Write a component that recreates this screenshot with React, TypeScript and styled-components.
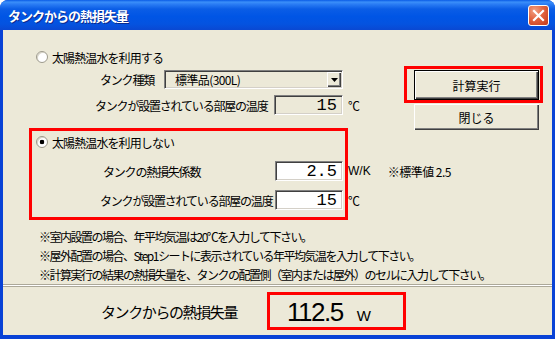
import React from 'react'
import styled, { createGlobalStyle } from 'styled-components'

const UI_FONT = `"Noto Sans CJK JP", "Noto Sans CJK SC", "Noto Sans", sans-serif`

const GlobalStyle = createGlobalStyle`
  html, body {
    margin: 0;
    padding: 0;
    background: #ffffff;
  }
  body {
    font-family: ${UI_FONT};
    font-size: 12px;
    color: #000;
  }
  #root {
    width: 555px;
    height: 339px;
  }
`

const Window = styled.div`
  width: 555px;
  height: 339px;
  display: flex;
  flex-direction: column;
  border-radius: 8px 8px 0 0;
  overflow: hidden;
  background: #0a46d8;
`

const TitleBar = styled.div`
  flex: none;
  height: 30px;
  display: flex;
  align-items: center;
  justify-content: space-between;
  padding: 0 6px 0 8px;
  background: linear-gradient(
    180deg,
    #0a5be6 0%,
    #3b8ff9 7%,
    #2a7cf4 14%,
    #0b5de6 30%,
    #0055e5 55%,
    #0453e0 80%,
    #0a48d2 100%
  );
`

const Title = styled.span`
  font-family: ${UI_FONT};
  font-size: 13px;
  font-weight: bold;
  letter-spacing: -1px;
  color: #ffffff;
  text-shadow: 1px 1px 0 #0a2a8e;
`

const CloseButton = styled.div`
  width: 21px;
  height: 21px;
  box-sizing: border-box;
  border: 1px solid #ffffff;
  border-radius: 3px;
  display: flex;
  align-items: center;
  justify-content: center;
  background: radial-gradient(circle at 30% 25%, #f2a083 0%, #e2643f 45%, #c2391a 100%);
`

const Frame = styled.div`
  flex: 1;
  display: flex;
  flex-direction: column;
  border-style: solid;
  border-color: #0842d6;
  border-width: 0 3px 4px 3px;
  background: #ece9d8;
`

const TopSection = styled.div`
  display: flex;
  align-items: flex-start;
  gap: 56px;
  padding: 13px 0 0 26px;
`

const Options = styled.div`
  width: 319px;
  display: flex;
  flex-direction: column;
  gap: 6px;
`

const Group = styled.div<{ $highlight?: boolean }>`
  display: flex;
  flex-direction: column;
  border: 3px solid ${({ $highlight }) => ($highlight ? '#ff0000' : 'transparent')};
  padding: 2px 4px ${({ $highlight }) => ($highlight ? 7 : 4)}px 4px;
`

const RadioRow = styled.label`
  height: 18px;
  display: flex;
  align-items: center;
  gap: 4px;
  white-space: nowrap;
  letter-spacing: -0.9px;
`

const RadioMark = styled.span<{ $checked?: boolean }>`
  flex: none;
  width: 12px;
  height: 12px;
  box-sizing: border-box;
  border-radius: 50%;
  border: 1px solid #9d9a8c;
  box-shadow: inset 1px 1px 0 #d9d6ca;
  background: ${({ $checked }) =>
    $checked ? 'radial-gradient(circle, #000 0 2px, #ffffff 2.6px)' : '#ffffff'};
`

const Field = styled.div<{ $top: number; $indent: number }>`
  display: flex;
  align-items: center;
  margin-top: ${({ $top }) => $top}px;
  padding-left: ${({ $indent }) => $indent}px;
  white-space: nowrap;
`

const Label = styled.span<{ $width: number }>`
  flex: none;
  width: ${({ $width }) => $width}px;
  letter-spacing: -1.2px;
`

const sunken = `
  box-sizing: border-box;
  border: 1px solid;
  border-color: #808080 #ffffff #ffffff #808080;
  box-shadow: inset 1px 1px 0 #404040, inset -1px -1px 0 #d4d0c8;
`

const Select = styled.div`
  ${sunken}
  flex: none;
  width: 179px;
  height: 19px;
  display: flex;
  align-items: center;
  justify-content: space-between;
  padding: 0 1px 0 10px;
  background: #ece9d8;
  letter-spacing: -0.6px;
`

const DropButton = styled.span`
  width: 14px;
  height: 15px;
  display: flex;
  align-items: center;
  justify-content: center;
  background: #ece9d8;
  box-shadow: inset 1px 1px 0 #ffffff, inset -1px -1px 0 #404040, inset -2px -2px 0 #808080;
`

const NumberBox = styled.input<{ $width: number }>`
  ${sunken}
  flex: none;
  width: ${({ $width }) => $width}px;
  height: 20px;
  margin: 0;
  padding: 0 5px 0 0;
  text-align: right;
  font-family: "Liberation Mono", "DejaVu Sans Mono", monospace;
  font-size: 17px;
  color: #000;
  background: ${({ disabled }) => (disabled ? '#ece9d8' : '#ffffff')};
  outline: none;
  &:disabled {
    color: #000;
  }
`

const Unit = styled.span<{ $gap?: number; $latin?: boolean }>`
  margin-left: ${({ $gap }) => $gap ?? 5}px;
  font-family: ${({ $latin }) => ($latin ? `"Liberation Sans", ${UI_FONT}` : UI_FONT)};
  font-size: 12px;
  letter-spacing: ${({ $latin }) => ($latin ? 0 : -0.5)}px;
`

const Actions = styled.div`
  display: flex;
  flex-direction: column;
  align-items: flex-start;
  gap: 1px;
  margin-top: 23px;
`

const DefaultFrame = styled.div`
  border: 3px solid #ff0000;
  padding: 1px 1px 0 7px;
`

const Button = styled.button<{ $default?: boolean }>`
  width: 125px;
  height: ${({ $default }) => ($default ? 30 : 26)}px;
  margin: 0 0 0 ${({ $default }) => ($default ? 0 : 10)}px;
  padding: 0;
  box-sizing: border-box;
  border: ${({ $default }) => ($default ? '1px solid #000' : 'none')};
  background: #ece9d8;
  box-shadow: inset 1px 1px 0 #ffffff, inset -1px -1px 0 #404040, inset -2px -2px 0 #808080;
  font-family: ${UI_FONT};
  font-size: 12px;
  color: #000;
`

const Notes = styled.div`
  margin-top: 7px;
  padding-left: 36px;
  font-size: 12px;
  line-height: 19px;
  letter-spacing: -1.5px;
  white-space: nowrap;
`

const Divider = styled.div`
  height: 1px;
  background: #ffffff;
  border-top: 1px solid #aca899;
  border-bottom: 1px solid #aca899;
`

const ResultRow = styled.div`
  flex: 1;
  display: flex;
  align-items: center;
  padding-left: 98px;
`

const ResultLabel = styled.span`
  font-size: 15px;
  letter-spacing: -1.4px;
`

const ResultBox = styled.div`
  width: 139px;
  height: 38px;
  box-sizing: border-box;
  margin-left: 30px;
  border: 3px solid #ff0000;
  display: flex;
  align-items: center;
  padding: 1px 0 0 17px;
`

const Amount = styled.span`
  font-family: "Liberation Sans", Arial, sans-serif;
  font-size: 26px;
  line-height: 1;
  letter-spacing: -1.5px;
  color: #000;
`

const AmountUnit = styled.span`
  margin-left: 14px;
  font-size: 15px;
  letter-spacing: 0;
`

export default function App() {
  return (
    <>
      <GlobalStyle />
      <Window>
        <TitleBar>
          <Title>タンクからの熱損失量</Title>
          <CloseButton>
            <svg width="13" height="13" viewBox="0 0 13 13">
              <path d="M2 2 L11 11 M11 2 L2 11" stroke="#ffffff" strokeWidth="2.2" strokeLinecap="square" />
            </svg>
          </CloseButton>
        </TitleBar>
        <Frame>
          <TopSection>
            <Options>
              <Group>
                <RadioRow>
                  <RadioMark />
                  太陽熱温水を利用する
                </RadioRow>
                <Field $top={4} $indent={64}>
                  <Label $width={64}>タンク種類</Label>
                  <Select>
                    <span>標準品(300L)</span>
                    <DropButton>
                      <svg width="7" height="4" viewBox="0 0 7 4">
                        <path d="M0 0 H7 L3.5 4 Z" fill="#000" />
                      </svg>
                    </DropButton>
                  </Select>
                </Field>
                <Field $top={6} $indent={59}>
                  <Label $width={179}>タンクが設置されている部屋の温度</Label>
                  <NumberBox $width={69} disabled defaultValue="15" />
                  <Unit>℃</Unit>
                </Field>
              </Group>
              <Group $highlight>
                <RadioRow>
                  <RadioMark $checked />
                  太陽熱温水を利用しない
                </RadioRow>
                <Field $top={10} $indent={67}>
                  <Label $width={172}>タンクの熱損失係数</Label>
                  <NumberBox $width={68} defaultValue="2.5" />
                  <Unit $latin>W/K</Unit>
                  <Unit $gap={17}>※標準値 2.5</Unit>
                </Field>
                <Field $top={9} $indent={64}>
                  <Label $width={175}>タンクが設置されている部屋の温度</Label>
                  <NumberBox $width={68} defaultValue="15" />
                  <Unit>℃</Unit>
                </Field>
              </Group>
            </Options>
            <Actions>
              <DefaultFrame>
                <Button $default>計算実行</Button>
              </DefaultFrame>
              <Button>閉じる</Button>
            </Actions>
          </TopSection>
          <Notes>
            <div>※室内設置の場合、年平均気温は20℃を入力して下さい。</div>
            <div>※屋外配置の場合、Step1シートに表示されている年平均気温を入力して下さい。</div>
            <div>※計算実行の結果の熱損失量を、タンクの配置側（室内または屋外）のセルに入力して下さい。</div>
          </Notes>
          <Divider />
          <ResultRow>
            <ResultLabel>タンクからの熱損失量</ResultLabel>
            <ResultBox>
              <Amount>
                112.5
                <AmountUnit>W</AmountUnit>
              </Amount>
            </ResultBox>
          </ResultRow>
        </Frame>
      </Window>
    </>
  )
}
